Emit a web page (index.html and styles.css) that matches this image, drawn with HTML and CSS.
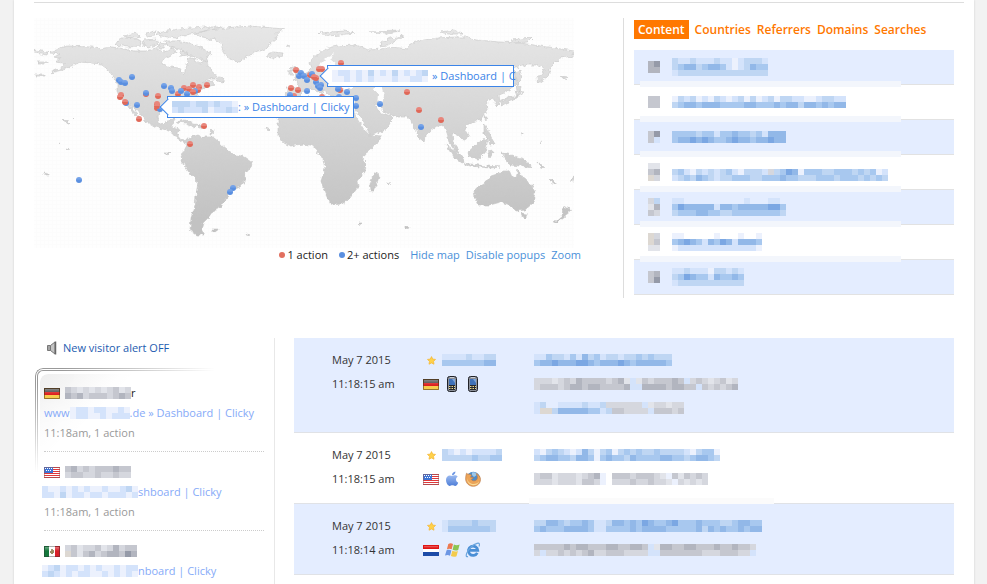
FILE: index.html
```html
<!DOCTYPE html>
<html lang="en">
<head>
<meta charset="utf-8">
<title>Visitors</title>
<link rel="stylesheet" href="styles.css">
</head>
<body>
<svg class="defs" aria-hidden="true">
  <defs>
    <linearGradient id="land" gradientUnits="userSpaceOnUse" x1="0" y1="30" x2="0" y2="220">
      <stop offset="0" stop-color="#e6e6e6"/><stop offset="0.45" stop-color="#d6d6d6"/><stop offset="1" stop-color="#c2c2c2"/>
    </linearGradient>
    <linearGradient id="red" x1="0" y1="0" x2="0" y2="1">
      <stop offset="0.5" stop-color="#e8857b"/><stop offset="0.5" stop-color="#e06858"/>
    </linearGradient>
    <linearGradient id="blue" x1="0" y1="0" x2="0" y2="1">
      <stop offset="0.3" stop-color="#74a2e8"/><stop offset="0.6" stop-color="#5a8fe0"/>
    </linearGradient>
    <linearGradient id="shine" x1="0" y1="0" x2="0" y2="1">
      <stop offset="0" stop-color="#fff" stop-opacity=".35"/><stop offset="1" stop-color="#fff" stop-opacity="0"/>
    </linearGradient>
    <linearGradient id="appleFill" x1="0" y1="0" x2="0" y2="1">
      <stop offset="0" stop-color="#9dbbf0"/><stop offset="1" stop-color="#4f7fd8"/>
    </linearGradient>
    <pattern id="grid" width="4" height="4" patternUnits="userSpaceOnUse">
      <rect width="4" height="4" fill="#fefefe"/><path d="M0 .5H4M.5 0V4" stroke="#fcfcfc"/>
    </pattern>
    <filter id="coast" x="0" y="0" width="1" height="1">
      <feTurbulence type="fractalNoise" baseFrequency="0.25" numOctaves="2" seed="4"/>
      <feDisplacementMap in="SourceGraphic" scale="5" xChannelSelector="R" yChannelSelector="G"/>
    </filter>
    <symbol id="de" viewBox="0 0 16 11">
      <path fill="#444" d="M0 0h16v4H0z"/><path fill="#dc2020" d="M0 4h16v3H0z"/><path fill="#f6cc4c" d="M0 7h16v4H0z"/>
      <path fill="url(#shine)" d="M1 1h14v5H1z"/><path fill="none" stroke="#5b3a14" stroke-opacity=".6" d="M.5.5h15v10H.5z"/>
    </symbol>
    <symbol id="us" viewBox="0 0 16 11">
      <path fill="#fff" d="M0 0h16v11H0z"/><path stroke="#e0383a" d="M0 .5h16M0 2.5h16M0 4.5h16M0 6.5h16M0 8.5h16M0 10.5h16"/>
      <path fill="#3d74d6" d="M0 0h9v6H0z"/><path stroke="#fff" stroke-dasharray="1 1" d="M1 1.5h7M2 3.5h6"/>
      <path fill="none" stroke="#8a5a60" stroke-opacity=".5" d="M.5.5h15v10H.5z"/>
    </symbol>
    <symbol id="mx" viewBox="0 0 16 11">
      <path fill="#fff" d="M0 0h16v11H0z"/><path fill="#15783c" d="M0 0h5v11H0z"/><path fill="#d8202a" d="M11 0h5v11h-5z"/>
      <path fill="#9a8a60" d="M7 3h2v1h1v3H9v1H7V7H6V5h1z"/><path fill="url(#shine)" d="M1 1h14v4H1z"/>
      <path fill="none" stroke="#333" stroke-opacity=".4" d="M.5.5h15v10H.5z"/>
    </symbol>
    <symbol id="nl" viewBox="0 0 16 11">
      <path fill="#fff" d="M0 0h16v11H0z"/><path fill="#e01414" d="M0 0h16v4H0z"/><path fill="#1d4ca8" d="M0 7h16v4H0z"/>
      <path fill="url(#shine)" d="M1 1h14v2H1z"/>
    </symbol>
    <symbol id="star" viewBox="0 0 9 9">
      <path fill="#ffd24a" stroke="#f4b93c" stroke-width=".8" stroke-linejoin="round" d="M4.500.600 5.700 3.100 8.500 3.400 6.500 5.400 7 8.200 4.500 6.900 2 8.200 2.500 5.400.500 3.400 3.300 3.100z"/>
    </symbol>
    <symbol id="phone" viewBox="0 0 16 16">
      <rect x="3.500" y=".5" width="9" height="15" rx="2" fill="#8b8f98" stroke="#202228"/>
      <path fill="#3f71b8" d="M5 3h6v6H5z"/><path fill="#7ca6dc" d="M8 3h3v4z"/>
      <path fill="#26282e" d="M5 9h6v5H5z"/><path stroke="#e9d78c" stroke-dasharray="1.500 1" d="M5 10.500h6M5 12.500h6"/><path stroke="#c9ccd2" d="M6 1.500h4"/>
    </symbol>
    <symbol id="apple" viewBox="0 0 16 16">
      <path fill="url(#appleFill)" d="M8.300 4.900c1-.6 2.100-1 3.300-.6 1 .2 1.700.8 2.100 1.300-2.500 1.600-2.100 5 .5 6.100-.6 1.600-1.700 3.200-3.100 3.200-1 0-1.500-.6-2.700-.6s-1.700.6-2.700.6C3.800 14.900 2 11.700 2 9c0-3 1.900-4.600 3.700-4.600 1.100 0 1.900.5 2.600.5z"/>
      <path fill="#6a94e2" d="M8 4.200C8 2.300 9.500.700 11.400.500c.2 2-1.400 3.700-3.400 3.700z"/>
    </symbol>
    <symbol id="firefox" viewBox="0 0 16 16">
      <circle cx="8.300" cy="7.600" r="6.800" fill="#4f8cc8"/><path fill="#9cc8ea" d="M7 1.500c3-.8 5 .5 5.500 2L9 6 7 4z"/>
      <path fill="#ecA458" stroke="#b9784a" stroke-width=".6" d="M1.500 2.200c.8.800 1.600 1 2.700 1 1 0 1.800.3 2.300.8L5.500 6.300l3 .3c-.2 1-1.500 1.200-2.300 1.800.8 1.600 3.700 2 5.200.6C13 7.500 12.700 4.600 11 2.500c2.800 1 4.600 3.300 4.500 6.200-.2 3.900-3.400 6.600-7.200 6.600C4 15.300.700 12 .600 8 .600 5.600 1 4 1.500 2.200z"/>
      <path fill="#f9dc9a" d="M2 7c.3 3.300 3 6 6.500 6 2.500 0 4.700-1 6-3.300-1 3.300-3.500 4.800-6.500 4.600C4.500 14 1.800 11 2 7z"/>
    </symbol>
    <symbol id="windows" viewBox="0 0 16 16">
      <path fill="#ec7a52" d="M4.300 2C6 1 7.500 1.200 9 2L7.700 7.300C6 6.500 4.600 6.400 2.900 7.200z"/>
      <path fill="#8cc552" d="M9.900 2.500c1.800.9 3.500 1 5.700.1L14.200 8c-2 .9-3.900.6-5.600-.3z"/>
      <path fill="#6d97e4" d="M2.600 8.200c1.700-.8 3.200-.6 4.800.2L6 13.700c-1.700-.9-3.200-1-5-.1z"/>
      <path fill="#f3cb4c" d="M8.300 8.700c1.700.9 3.600 1.100 5.600.3l-1.400 5.300c-2 .9-3.900.6-5.600-.3z"/>
    </symbol>
    <symbol id="ie" viewBox="0 0 16 16">
      <path fill="none" stroke="#4a8fd6" stroke-width="2.700" d="M12.300 10.900A4.700 4.700 0 1 1 12.800 8.400H4.500"/>
      <path fill="none" stroke="#6aa5de" stroke-width="1.200" d="M3 14.600c-2 .5-2.500-1-.8-4.300C4.500 6 8.600 2.300 12 1.300c2.500-.7 3 1 2 3.200"/>
    </symbol>
    <symbol id="speaker" viewBox="0 0 12 14">
      <path fill="#a4a4a4" stroke="#777" d="M1.500 4.500h3v5h-3z"/><path fill="#c4c4c4" stroke="#777" d="M4.500 4.500 9 1v12L4.500 9.500z"/><path stroke="#666" stroke-width="1.500" d="M9.500.500v13"/>
    </symbol>
  </defs>
</svg>

<main class="page">
  <section class="overview">
    <div class="world">
      <div class="map">
        <svg class="map-image" viewBox="34 18 540 230" role="img" aria-label="World map">
          <rect x="34" y="18" width="540" height="230" fill="url(#grid)"/>
          <g filter="url(#coast)">
            <rect x="34" y="18" width="540" height="230" fill="none"/>
            <g fill="url(#land)" stroke="#c6c6c6" stroke-width=".6">
              <path d="M50 53 56 49 68 46 92 47 100 49 112 47 124 49 134 51 146 51 156 48 164 52 170 50 173 46 176 52 164 59 162 64 170 67 179 68 184 75 186 68 188 62 187 57 194 59 200 63 206 61 210 69 217 75 216 79 208 79 202 83 210 81 214 84 207 87 200 90 197 97 192 104 185 107 182 116 178 109 168 107 161 110 158 116 159 123 164 125 168 120 175 119 172 127 179 129 178 135 182 140 188 139 192 141 190 144 183 142 177 138 174 133 166 130 156 127 146 121 142 116 136 109 130 104 132 108 138 115 139 119 135 115 129 108 126 103 119 98 117 91 117 83 113 76 107 69 101 64 92 63 80 62 72 66 62 70 50 73 61 68 66 64 57 62 60 58 54 57 60 54z"/>
              <path d="M115 45 120 38 132 38 142 41 140 46 128 47zM123 36 136 33 140 36 130 38zM144 40 156 39 158 44 148 48 143 45zM157 33 178 29 205 27 222 27 205 31 190 34 176 38 160 36zM146 33 156 31 154 36 146 37zM164 41 176 41 188 43 200 47 212 54 206 57 208 62 197 58 188 55 182 50 170 47zM180 52 186 50 188 55 181 56zM160 43 166 44 164 48 158 48z"/>
              <path d="M195 34 208 30 225 28 250 26 284 29 276 33 277 38 270 44 268 48 256 52 246 57 240 62 234 61 226 57 222 50 222 44 216 40 202 38zM267 54 273 52 283 53 282 56 274 58 268 56zM218 77 225 78 224 82 217 81z"/>
              <path d="M34 50 48 52 47 55 34 53zM38 62 48 62 46 64 38 64zM36 74 44 74 44 76 36 76zM62 119 68 121 71 124 68 124zM177 122 184 120 194 124 200 125 194 127 186 123zM197 125 208 126 200 128zM165 153 170 153 168 155zM211 128 213 130 212 134 210 134zM212 229 218 229 217 232 211 231zM246 233 250 235 248 236zM266 127 270 129 268 131zM44 173 48 174 48 175 44 174z"/>
              <path d="M181 157 186 147 192 137 198 135 202 137 213 137 220 143 228 150 233 154 245 157 252 162 251 167 246 173 245 181 240 187 233 190 229 196 222 204 219 209 213 211 208 218 203 223 201 230 204 235 197 235 190 230 191 218 195 206 196 196 198 182 190 174 183 163z"/>
              <path d="M288 99 300 98 312 96 318 102 330 103 342 104 352 105 355 113 362 125 369 135 382 136 377 144 364 155 363 161 366 164 365 172 357 181 358 187 350 198 342 204 331 205 325 193 321 181 325 169 323 159 318 152 314 146 304 144 290 146 284 143 278 136 278 118 283 107z"/>
              <path d="M378 172 379 177 374 191 370 191 369 184 373 176z"/>
              <path d="M310 63 312 59 320 52 328 48 336 46 356 45 364 48 368 50 382 49 392 47 408 49 412 43 424 40 438 38 456 37 468 37 476 40 500 42 520 43 548 47 574 51 574 56 560 58 555 63 550 68 550 75 538 83 536 80 541 74 545 68 537 65 522 65 509 69 516 73 520 80 514 86 504 93 499 95 500 103 497 106 493 98 486 101 488 108 481 119 472 123 466 125 465 129 469 136 463 140 457 134 452 134 453 143 459 152 456 151 450 143 447 133 443 124 438 125 430 131 426 135 425 143 419 139 414 127 408 117 397 117 384 112 377 103 375 104 381 113 388 115 393 118 386 130 370 135 362 120 355 110 355 97 346 99 333 97 330 94 321 90 326 98 318 92 312 88 305 91 298 98 290 99 286 97 287 88 297 88 298 82 292 79 301 76 308 72 312 68z"/>
              <path d="M290 68 296 66 301 73 303 77 294 78 297 73zM288 71 293 70 292 75 288 75zM319 33 345 31 355 33 340 35 328 36zM381 43 390 38 404 36 396 40 388 45 380 46zM440 32 455 30 463 34 448 34zM510 40 532 38 528 42 514 43zM370 32 400 31 388 33z"/>
              <path d="M514 72 520 70 522 80 518 84 516 80zM508 101 517 98 521 87 516 83 518 97 509 97 500 101 502 106 509 103zM515 91 524 92 517 96zM484 117 487 117 486 121zM484 124 488 130 492 139 495 144 490 145 488 138 484 134zM468 152 478 143 488 137 486 150 479 159 469 157zM446 144 452 149 460 154 465 162 462 163 454 157zM464 163 478 165 486 166 500 167 490 168 470 166zM488 152 494 151 490 158zM502 153 511 155 524 159 532 168 520 166 510 165z"/>
              <path d="M474 190 484 184 491 176 500 173 503 170 509 170 512 177 516 178 518 170 522 177 530 183 535 192 533 203 525 210 516 211 510 205 501 202 490 205 479 205 475 197zM521 213 527 214 526 218 523 218zM563 206 572 210 566 215 558 222 554 222 562 215zM550 178 556 184 552 184zM538 162 544 167 542 169z"/>
              <path d="M405 226 410 227 409 229 405 228zM358 223 361 223 360 225zM386 183 391 184 388 185zM560 76 568 78 566 79zM520 133 522 133 522 134zM540 141 542 142 541 143zM72 118 73 119zM59 143 61 144 60 145zM66 149 69 150 68 151zM287 45 290 46 288 47zM570 180 574 177 573 181z"/>
            </g>
            <path fill="#fefefe" d="M302 93 312 90 321 95 330 98 342 101 354 98 352 104 340 103 328 101 318 101 311 96 302 97zM338 83 350 80 360 85 350 89 340 88zM376 84 382 88 384 96 382 104 378 103 379 95 374 89zM319 65 326 58 334 54 330 60 336 65 344 66 334 69 324 71zM354 111 360 118 368 131 364 129 357 118z"/>
          </g>
          <g id="markers"></g>
        </svg>
        <div class="tip tip-america"><span class="tip-text"><svg class="mosaic" data-cells="2221221211m|121112m1121"></svg><a href="#">: » Dashboard | Clicky</a></span></div>
        <div class="tip tip-europe"><span class="tip-text"><svg class="mosaic" data-cells="m11m1m2m1m2m1m12|mm1m1m1mmm1mm11m"></svg><a href="#">» Dashboard | C</a></span></div>
      </div>
      <div class="legend">
        <span class="key"><i class="dot dot-red"></i>1 action</span>
        <span class="key"><i class="dot dot-blue"></i>2+ actions</span>
        <a href="#">Hide map</a><a href="#">Disable popups</a><a href="#">Zoom</a>
      </div>
    </div>

    <div class="top-list">
      <nav class="tabs">
        <a class="active" href="#">Content</a><a href="#">Countries</a><a href="#">Referrers</a><a href="#">Domains</a><a href="#">Searches</a>
      </nav>
      <ul class="rows">
        <li><svg class="mosaic" data-cells="de|dd"></svg><svg class="mosaic" data-cells="2112111211m12221|2344234431m12433|1222222222222222"></svg></li>
        <li><svg class="mosaic" data-cells="cc|cc"></svg><svg class="mosaic" data-cells="m212m1m21m12m2m12m2211mm12211|23443444333344333434424434344"></svg></li>
        <li><svg class="mosaic" data-cells="ce|c1"></svg><svg class="mosaic" data-cells="3333233133433231444|3445454334544344544"></svg></li>
        <li><svg class="mosaic" data-cells="aa|cd|fb"></svg><svg class="mosaic" data-cells="000000000000000000000000000000000000|231m2121231m2221b2354m333223332323m1|123243212233322333433222333233323232"></svg></li>
        <li><svg class="mosaic" data-cells="b2|ad|cb"></svg><svg class="mosaic" data-cells="1100000000001000110|3544444144344444553|2333443322333333332"></svg></li>
        <li><svg class="mosaic" data-cells="fb|fc|aa"></svg><svg class="mosaic" data-cells="mm00000m000m00m|345431435414443|m1111111111111m"></svg></li>
        <li><svg class="mosaic" data-cells="cd|ce"></svg><svg class="mosaic" data-cells="112111m22121|235433143343|122222222222"></svg></li>
      </ul>
    </div>
  </section>

  <section class="details">
    <aside class="sidebar">
      <a class="alert" href="#"><svg class="speaker"><use href="#speaker"/></svg>New visitor alert OFF</a>
      <ul class="visitors">
        <li>
          <div class="line"><svg class="flag"><use href="#de"/></svg><svg class="mosaic" data-cells="cbabababcab|dcdbcccbcdc"></svg><span class="name">r</span></div>
          <div class="line url"><a href="#">www</a><svg class="mosaic" data-cells="m11m11mm1m|m11mm1m111"></svg><a href="#">.de » Dashboard | Clicky</a></div>
          <div class="line when">11:18am, 1 action</div>
        </li>
        <li>
          <div class="line"><svg class="flag"><use href="#us"/></svg><svg class="mosaic" data-cells="cdbcbcccdcc|bccbbcbbcbb"></svg></div>
          <div class="line url"><svg class="mosaic lead" data-cells="1mm1m1m1mm1mm12m|11m2m11m11m111m1"></svg><a href="#">shboard | Clicky</a></div>
          <div class="line when">11:18am, 1 action</div>
        </li>
        <li>
          <div class="line"><svg class="flag"><use href="#mx"/></svg><svg class="mosaic" data-cells="bcabbcabdbcc|fcacdbcddced"></svg></div>
          <div class="line url"><svg class="mosaic lead" data-cells="m12m11m1m1mm1m11|121m1m11mm1m1m1m"></svg><a href="#">nboard | Clicky</a></div>
        </li>
      </ul>
    </aside>

    <div class="log">
      <article class="entry shaded">
        <div><div>May 7 2015</div><div>11:18:15 am</div></div>
        <div>
          <div class="who"><svg class="star"><use href="#star"/></svg><svg class="mosaic" data-cells="111121122|333333344"></svg></div>
          <div class="icons"><svg class="flag"><use href="#de"/></svg><svg class="icon"><use href="#phone"/></svg><svg class="icon"><use href="#phone"/></svg></div>
        </div>
        <div>
          <div><svg class="mosaic" data-cells="11322131423122122323222|34454445543444543444443"></svg></div>
          <div><svg class="mosaic" data-cells="bbbabcbdccccbcda1acbcccdc1bcbabcab|bcccbcddcddccccd11ddddcddcc1cbcbcd"></svg></div>
          <div><svg class="mosaic" data-cells="120011112112bbbbbb1abbabb|1ff2444443312ccbbbb1cccbc"></svg></div>
        </div>
      </article>
      <article class="entry masked">
        <div><div>May 7 2015</div><div>11:18:15 am</div></div>
        <div>
          <div class="who"><svg class="star"><use href="#star"/></svg><svg class="mosaic" data-cells="21m1m11112|2222232233"></svg></div>
          <div class="icons"><svg class="flag"><use href="#us"/></svg><svg class="icon"><use href="#apple"/></svg><svg class="icon"><use href="#firefox"/></svg></div>
        </div>
        <div>
          <div><svg class="mosaic" data-cells="1m2321m142m23m232322322221m233m|2344332443m34332433334433234432"></svg></div>
          <div><svg class="mosaic" data-cells="bccabbbabcdm0cccbcccbamcacbcb|bbbabbbaccbm0bbbcbbcbbambabab"></svg></div>
        </div>
      </article>
      <article class="entry shaded">
        <div><div>May 7 2015</div><div>11:18:14 am</div></div>
        <div>
          <div class="who"><svg class="star"><use href="#star"/></svg><svg class="mosaic" data-cells="122223222|133333332"></svg></div>
          <div class="icons"><svg class="flag"><use href="#nl"/></svg><svg class="icon"><use href="#windows"/></svg><svg class="icon"><use href="#ie"/></svg></div>
        </div>
        <div>
          <div><svg class="mosaic" data-cells="22443233431124434354334533343332234433|34333444431133334344443333342434334344"></svg></div>
          <div><svg class="mosaic" data-cells="cccccdcddcccddccddc1addccddcccdccdccb|b1bbcbcbcdbbcccbbbb11cccccccbbbcccbb1"></svg></div>
        </div>
      </article>
    </div>
  </section>
</main>
<script src="script.js"></script>
</body>
</html>
```
FILE: styles.css
```css
* { box-sizing: border-box; }
body {
  margin: 0;
  padding: 0 13px 0 14px;
  height: 100vh;
  overflow: hidden;
  background: #f2f2f2;
  color: #333;
  font: 11px/20px "Open Sans", "Noto Sans", sans-serif;
}
a { color: #4a90d9; text-decoration: none; }
ul { list-style: none; margin: 0; padding: 0; }
svg { display: block; flex: none; }
.defs { position: absolute; width: 0; height: 0; }

.page {
  min-height: 100vh;
  padding: 2px 20px 0;
  background: #fff;
  box-shadow: 0 0 2px #ccc;
}
.page::before {
  content: "";
  display: block;
  height: 1px;
  margin: 0 -10px 15px 0;
  background: #ddd;
}

.overview { display: grid; grid-template-columns: 1fr 331px; }
.map { position: relative; max-width: 540px; }
.map-image { width: 100%; height: auto; }

.tip {
  position: absolute;
  width: 187px;
  height: 22px;
  border: 1px solid #3b84e8;
  background: #fff;
}
.tip::before {
  content: "";
  position: absolute;
  left: -6px;
  top: 4px;
  width: 11px;
  height: 11px;
  border: solid #3b84e8;
  border-width: 0 0 1px 1px;
  background: #fff;
  transform: rotate(45deg);
}
.tip-text {
  position: relative;
  display: flex;
  align-items: center;
  height: 20px;
  padding-left: 4px;
  white-space: nowrap;
}
.tip a { color: #3b84e8; }
.tip-america { left: 133px; top: 78px; }
.tip-europe { left: 293px; top: 47px; }
.tip-europe .tip-text { gap: 4px; }

.legend {
  display: flex;
  justify-content: flex-end;
  gap: 6px;
  padding-right: 42px;
  line-height: 13px;
  white-space: nowrap;
}
.key { display: flex; align-items: center; gap: 2px; margin-right: 5px; color: #222; }
.dot { width: 6px; height: 6px; border-radius: 3px; }
.dot-red { background: #e2705f; }
.dot-blue { background: #5a8fe0; }

.top-list { height: 280px; padding: 2px 0 0 10px; border-left: 1px solid #ddd; }
.tabs { display: flex; gap: 6px; height: 30px; line-height: 19px; font-size: 12px; font-weight: 600; }
.tabs a { color: #ff7800; }
.tabs .active { align-self: flex-start; padding: 0 4px; background: #ff7800; color: #fff; }
.rows li {
  position: relative;
  display: flex;
  align-items: center;
  gap: 12px;
  height: 35px;
  padding-left: 14px;
  border-bottom: 1px solid #e2e2e2;
}
.rows li:nth-child(odd) { background: #e4edff; }
.rows li:not(:last-child)::after {
  content: "";
  position: absolute;
  z-index: 1;
  left: 6px;
  right: 53px;
  bottom: -3px;
  height: 6px;
  background: #f3f6fc;
}

.details { display: grid; grid-template-columns: 241px 1fr; gap: 19px; margin-top: 40px; }
.sidebar { border-right: 1px solid #e8e8e8; }
.alert { display: flex; align-items: center; gap: 5px; height: 20px; padding-left: 12px; color: #1d5cb0; }
.speaker { width: 12px; height: 14px; }
.visitors { position: relative; margin-top: 10px; padding: 5px 10px 0; }
.visitors::before, .visitors::after {
  content: "";
  position: absolute;
  left: 1px;
  top: 0;
  width: 200px;
  height: 110px;
  border: double #999;
  border-width: 3px 0 0 3px;
  border-radius: 8px 0 0 0;
  mask-image: radial-gradient(ellipse 180px 105px at 0 0, #000 15%, transparent 100%);
}
.visitors::after {
  left: 6px;
  top: 6px;
  border: 0;
  background: linear-gradient(135deg, #eee, #fff 30%);
}
.visitors li { position: relative; z-index: 1; padding: 10px 0 8px; border-bottom: 1px dotted #ccc; }
.line { display: flex; align-items: center; height: 20px; white-space: nowrap; }
.flag { width: 16px; height: 11px; }
.line .flag { margin-right: 5px; }
.name { color: #222; }
.url a { color: #86aaf8; }
.url .lead { margin-left: -2px; }
.when { color: #999; }

.log { min-width: 0; }
.entry {
  position: relative;
  display: grid;
  grid-template-columns: 91px 111px 1fr;
  padding: 10px 0 12px 38px;
  border-bottom: 1px solid #e0e2e6;
  line-height: 24px;
}
.shaded { background: #e4edff; }
.masked::after {
  content: "";
  position: absolute;
  left: 235px;
  bottom: -1px;
  width: 245px;
  height: 6px;
  background: #fbfbfb;
}
.entry > div > div { display: flex; align-items: center; height: 24px; }
.who { padding-left: 4px; gap: 6px; }
.star { width: 9px; height: 9px; }
.icons { gap: 5px; }
.icon { width: 16px; height: 16px; }
```
FILE: script.js
```js
const SVG = "http://www.w3.org/2000/svg";

// Masked text is drawn as a grid of 6px colour cells, one letter for each cell.
const CELL = 6;
const COLORS = {
  m: "#ecf1fd", 1: "#d4e3fb", 2: "#bfd6f3", 3: "#a8c8ef", 4: "#92b8e8", 5: "#7ba7e3",
  a: "#e2e4ea", b: "#d5d7de", c: "#c5c7cf", d: "#b2b5bf", e: "#959aa8", f: "#ddd8d2"
};

function shape(name, attrs) {
  const node = document.createElementNS(SVG, name);
  for (const key in attrs) node.setAttribute(key, attrs[key]);
  return node;
}

document.querySelectorAll(".mosaic").forEach(svg => {
  const rows = svg.dataset.cells.split("|");
  svg.setAttribute("width", Math.max(...rows.map(r => r.length)) * CELL);
  svg.setAttribute("height", rows.length * CELL);
  svg.setAttribute("aria-hidden", "true");
  svg.setAttribute("shape-rendering", "crispEdges");
  rows.forEach((row, y) => [...row].forEach((c, x) => {
    if (COLORS[c]) svg.append(shape("rect", { x: x * CELL, y: y * CELL, width: CELL, height: CELL, fill: COLORS[c] }));
  }));
});

const markers = {
  red: [[121,95],[120,97],[139,119],[158,96],[157,104],[157,108],[190,144],[204,126],[184,88],[193,85],[189,89],[199,87],[198,90],[207,85],[178,94],[146,94],[296,70],[291,88],[298,90],[294,96],[310,75],[319,69],[322,69],[341,63],[340,90],[407,92],[419,110],[441,120],[322,97]],
  blue: [[119,80],[121,82],[125,83],[132,77],[146,93],[164,86],[171,88],[172,91],[137,105],[126,103],[160,109],[181,91],[187,94],[195,91],[79,180],[233,188],[230,192],[299,76],[301,73],[304,76],[307,80],[307,91],[290,95],[312,74],[316,82],[318,86],[321,85],[320,88],[338,89],[347,92],[339,97],[356,98],[356,106],[380,104],[421,127]],
  top: [[125,102],[193,92],[157,106],[316,78],[314,77]]
};
const layer = document.getElementById("markers");
for (const kind of ["red", "blue", "top"]) {
  const fill = kind === "blue" ? "url(#blue)" : "url(#red)";
  markers[kind].forEach(([cx, cy]) => layer.append(shape("circle", { cx, cy, r: 3, fill })));
}
```
